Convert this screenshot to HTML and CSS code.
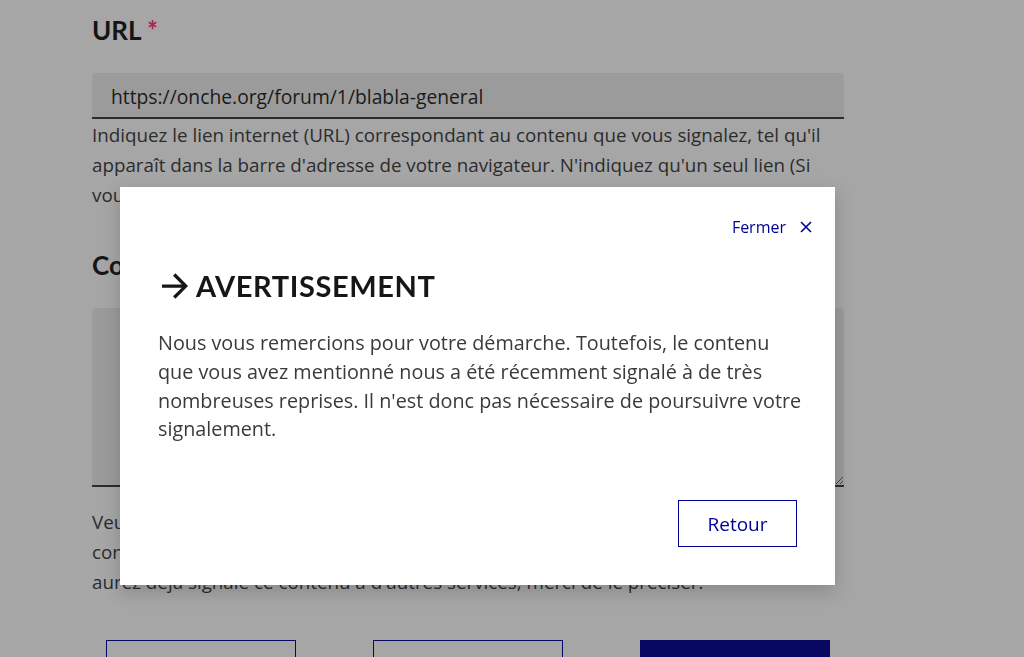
FILE: index.html
```html
<!DOCTYPE html>
<html lang="fr">

<head>
  <meta charset="UTF-8">
  <title>Signaler un contenu</title>
  <link rel="stylesheet" href="styles.css">
</head>

<body>
  <main class="page">
    <div class="field">
      <label class="field-label" for="url">URL <span class="required">*</span></label>
      <input class="field-input" id="url" type="text" value="https://onche.org/forum/1/blabla-general">
      <p class="field-hint hint-url">Indiquez le lien internet (URL) correspondant au contenu que vous signalez, tel qu'il
        apparaît dans la barre d'adresse de votre navigateur. N'indiquez qu'un seul lien (Si vous avez plusieurs
        contenus à signaler, faites plusieurs signalements).</p>
    </div>
    <div class="field">
      <label class="field-label" for="comment">Commentaire</label>
      <textarea class="field-textarea" id="comment"></textarea>
      <p class="field-hint hint-comment">Veuillez décrire le contenu que vous signalez et préciser en quoi il vous semble
        contraire à la loi. Si vous disposez d'éléments de contexte importants, ou si vous
        aurez déjà signalé ce contenu à d'autres services, merci de le préciser.</p>
    </div>
    <div class="actions">
      <button class="btn btn-secondary">Précédent</button>
      <button class="btn btn-secondary">Annuler</button>
      <button class="btn btn-primary">Suivant</button>
    </div>
  </main>

  <div class="modal-backdrop"></div>
  <div class="modal" role="dialog" aria-labelledby="modal-title">
    <div class="modal-header">
      <button class="modal-close">Fermer
        <svg width="12" height="12" viewBox="0 0 12 12" aria-hidden="true">
          <path d="M1 1l10 10M11 1L1 11" stroke="currentColor" stroke-width="1.6" />
        </svg>
      </button>
    </div>
    <div class="modal-content">
      <h1 class="modal-title" id="modal-title">
        <svg width="26" height="26" viewBox="4 4 16 16" aria-hidden="true">
          <path fill="currentColor" d="M16.172 11l-5.364-5.364 1.414-1.414L20 12l-7.778 7.778-1.414-1.414L16.172 13H4v-2z" />
        </svg>
        AVERTISSEMENT
      </h1>
      <p class="modal-text">Nous vous remercions pour votre démarche. Toutefois, le contenu que vous avez mentionné nous
        a été récemment signalé à de très nombreuses reprises. Il n'est donc pas nécessaire de poursuivre votre
        signalement.</p>
    </div>
    <div class="modal-footer">
      <button class="btn btn-secondary btn-back">Retour</button>
    </div>
  </div>
</body>

</html>
```

FILE: styles.css
```css
body {
  margin: 0;
  font-family: "Open Sans", "DejaVu Sans", sans-serif;
  color: #3a3a3a;
  background-color: #ffffff;
  overflow: hidden;
}

.page {
  width: 752px;
  margin-left: 92px;
  padding-top: 12px;
}

.field-label {
  display: block;
  font-family: "Lato", "DejaVu Sans", sans-serif;
  font-size: 26px;
  line-height: 36px;
  font-weight: 700;
  color: #161616;
}

.required {
  color: #ff3474;
}

.field-input {
  display: block;
  box-sizing: border-box;
  width: 100%;
  height: 46px;
  margin-top: 25px;
  padding: 2px 19px 0;
  border: 0;
  border-bottom: 2px solid #3a3a3a;
  border-radius: 4px 4px 0 0;
  background-color: #eeeeee;
  font-family: inherit;
  font-size: 19.3px;
  color: #1e1e1e;
}

.field-hint {
  margin: 0;
  font-size: 18.8px;
  line-height: 30px;
}

.hint-url {
  margin-top: 1px;
  margin-bottom: 37px;
}

.field-textarea {
  display: block;
  box-sizing: border-box;
  width: 100%;
  height: 179px;
  margin-top: 25px;
  border: 0;
  border-bottom: 2px solid #3a3a3a;
  border-radius: 4px 4px 0 0;
  background-color: #eeeeee;
  resize: vertical;
}

.hint-comment {
  margin-top: 20px;
}

.actions {
  display: flex;
  gap: 77px;
  padding-left: 14px;
  margin-top: 43px;
}

.btn {
  box-sizing: border-box;
  width: 190px;
  height: 64px;
  font-family: inherit;
  font-size: 19px;
  border: 1px solid #000091;
  background-color: #ffffff;
  color: #000091;
  cursor: pointer;
}

.btn-primary {
  background-color: #000091;
  color: #ffffff;
}

.modal-backdrop {
  position: fixed;
  inset: 0;
  background-color: rgba(22, 22, 22, 0.38);
}

.modal {
  position: fixed;
  left: 120px;
  top: 187px;
  width: 715px;
  height: 398px;
  box-sizing: border-box;
  display: flex;
  flex-direction: column;
  background-color: #ffffff;
  box-shadow: 0 6px 18px rgba(0, 0, 0, 0.18);
}

.modal-header {
  display: flex;
  justify-content: flex-end;
  padding: 29px 23px 0;
}

.modal-close {
  display: flex;
  align-items: center;
  gap: 14px;
  padding: 0;
  border: 0;
  background: none;
  font-family: inherit;
  font-size: 16px;
  color: #000091;
  cursor: pointer;
}

.modal-content {
  padding: 0 30px 0 38px;
}

.modal-title {
  display: flex;
  align-items: center;
  gap: 8px;
  margin: 30px 0 0;
  font-family: "Lato", "DejaVu Sans", sans-serif;
  font-size: 29px;
  line-height: 36px;
  font-weight: 700;
  letter-spacing: 0.6px;
  color: #161616;
}

.modal-title svg {
  margin-left: 4px;
}

.modal-text {
  margin: 25px 0 0;
  font-size: 19.8px;
  line-height: 28.8px;
  color: #3a3a3a;
}

.modal-footer {
  display: flex;
  justify-content: flex-end;
  margin-top: auto;
  padding: 0 38px 38px;
}

.btn-back {
  width: 119px;
  height: 47px;
}
```
